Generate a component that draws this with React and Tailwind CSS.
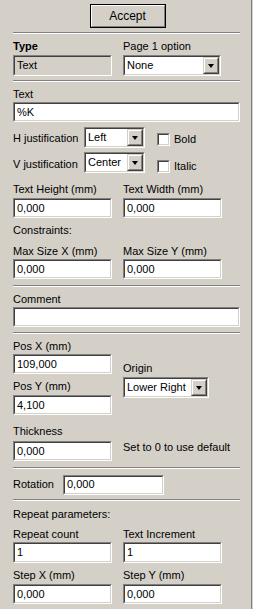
const font = { fontFamily: '"Liberation Sans", Arial, sans-serif' }

function Sunken({ className = "", inner = "bg-white", children }) {
  return (
    <div className={`border border-t-[#808080] border-l-[#808080] border-r-white border-b-white ${className}`}>
      <div className={`h-full border border-t-[#404040] border-l-[#404040] border-r-[#d4d0c8] border-b-[#d4d0c8] flex items-center ${inner}`}>
        {children}
      </div>
    </div>
  )
}

function Field({ value, className = "w-[99px]" }) {
  return (
    <Sunken className={`h-[20px] ${className}`}>
      <span className="pl-[2px] leading-none">{value}</span>
    </Sunken>
  )
}

function Combo({ value, className }) {
  return (
    <Sunken className={`h-[21px] ${className}`}>
      <span className="pl-[2px] flex-1 leading-none">{value}</span>
      <div className="h-full w-[16px] border border-t-[#d4d0c8] border-l-[#d4d0c8] border-r-[#404040] border-b-[#404040]">
        <div className="h-full w-full bg-[#d4d0c8] border border-t-white border-l-white border-r-[#808080] border-b-[#808080] flex items-center justify-center">
          <div className="w-0 h-0 border-l-[3.5px] border-r-[3.5px] border-t-[4px] border-l-transparent border-r-transparent border-t-black" />
        </div>
      </div>
    </Sunken>
  )
}

function Check({ label }) {
  return (
    <div className="flex items-center gap-[4px]">
      <div className="w-[13px] h-[13px] border border-t-[#808080] border-l-[#808080] border-r-white border-b-white">
        <div className="w-full h-full bg-white border border-t-[#404040] border-l-[#404040] border-r-[#d4d0c8] border-b-[#d4d0c8]" />
      </div>
      <span>{label}</span>
    </div>
  )
}

function Sep({ className = "" }) {
  return <div className={`w-[227px] border-t border-t-[#808080] border-b border-b-white ${className}`} />
}

function Label({ children, className = "" }) {
  return <div className={`h-[13px] leading-[13px] whitespace-nowrap ${className}`}>{children}</div>
}

export default function App() {
  return (
    <div
      className="w-[253px] h-[609px] bg-[#d4d0c8] text-black text-[11px] overflow-hidden flex"
      style={font}
    >
      <div className="w-[251px] pl-[13px] flex flex-col">
        {/* Accept */}
        <div className="w-[227px] flex justify-center pt-[4px] pl-[2px]">
          <div className="w-[76px] h-[24px] border border-black">
            <div className="w-full h-full border border-t-white border-l-white border-r-[#808080] border-b-[#808080] flex items-center justify-center">
              <span className="text-[12px]">Accept</span>
            </div>
          </div>
        </div>
        <Sep className="mt-[4px]" />

        {/* Type / Page option */}
        <div className="flex gap-[11px] mt-[6px]">
          <div className="w-[99px]">
            <Label className="font-bold">Type</Label>
            <Sunken className="h-[21px] mt-[2px] w-[99px]" inner="bg-[#d4d0c8]">
              <span className="pl-[2px] leading-none">Text</span>
            </Sunken>
          </div>
          <div>
            <Label>Page 1 option</Label>
            <Combo value="None" className="w-[98px] mt-[2px]" />
          </div>
        </div>
        <Sep className="mt-[4px]" />

        {/* Text */}
        <Label className="mt-[6px]">Text</Label>
        <Field value="%K" className="w-[227px] mt-[1px]" />

        <div className="flex items-center mt-[5px] h-[21px]">
          <span className="w-[71px] pt-[2px]">H justification</span>
          <Combo value="Left" className="w-[61px]" />
          <div className="ml-[12px] pt-[3px]"><Check label="Bold" /></div>
        </div>
        <div className="flex items-center mt-[4px] h-[21px]">
          <span className="w-[71px] pt-[4px]">V justification</span>
          <Combo value="Center" className="w-[61px]" />
          <div className="ml-[12px] pt-[7px]"><Check label="Italic" /></div>
        </div>

        <div className="flex gap-[11px] mt-[10px]">
          <div>
            <Label>Text Height (mm)</Label>
            <Field value="0,000" className="w-[99px] mt-[2px]" />
          </div>
          <div>
            <Label>Text Width (mm)</Label>
            <Field value="0,000" className="w-[99px] mt-[2px]" />
          </div>
        </div>
        <Label className="mt-[6px]">Constraints:</Label>
        <div className="flex gap-[11px] mt-[8px]">
          <div>
            <Label>Max Size X (mm)</Label>
            <Field value="0,000" className="w-[99px] mt-[1px]" />
          </div>
          <div>
            <Label>Max Size Y (mm)</Label>
            <Field value="0,000" className="w-[99px] mt-[1px]" />
          </div>
        </div>
        <Sep className="mt-[6px]" />

        <Label className="mt-[6px]">Comment</Label>
        <Field value="" className="w-[227px] mt-[1px]" />
        <Sep className="mt-[5px]" />

        {/* Position */}
        <div className="flex gap-[11px] mt-[6px]">
          <div>
            <Label>Pos X (mm)</Label>
            <Field value="109,000" className="w-[99px] mt-[1px]" />
            <Label className="mt-[6px]">Pos Y (mm)</Label>
            <Field value="4,100" className="w-[99px] mt-[2px]" />
          </div>
          <div className="pt-[22px]">
            <Label>Origin</Label>
            <Combo value="Lower Right" className="w-[86px] mt-[2px]" />
          </div>
        </div>

        <div className="flex gap-[11px] mt-[10px]">
          <div>
            <Label>Thickness</Label>
            <Field value="0,000" className="w-[99px] mt-[3px]" />
          </div>
          <Label className="pt-[16px] h-auto">Set to 0 to use default</Label>
        </div>
        <Sep className="mt-[6px]" />

        <div className="flex items-center mt-[5px] h-[21px]">
          <span className="w-[50px]">Rotation</span>
          <Field value="0,000" className="w-[101px]" />
        </div>
        <Sep className="mt-[4px]" />

        <Label className="mt-[7px]">Repeat parameters:</Label>
        <div className="flex gap-[11px] mt-[7px]">
          <div>
            <Label>Repeat count</Label>
            <Field value="1" className="w-[99px] mt-[1px] h-[21px]" />
          </div>
          <div>
            <Label>Text Increment</Label>
            <Field value="1" className="w-[99px] mt-[1px] h-[21px]" />
          </div>
        </div>
        <div className="flex gap-[11px] mt-[6px]">
          <div>
            <Label>Step X (mm)</Label>
            <Field value="0,000" className="w-[99px] mt-[2px]" />
          </div>
          <div>
            <Label>Step Y (mm)</Label>
            <Field value="0,000" className="w-[99px] mt-[2px]" />
          </div>
        </div>
      </div>
      <div className="w-[1px] h-full bg-[#808080]" />
      <div className="w-[1px] h-full bg-[#d4d0c8]" />
    </div>
  )
}
